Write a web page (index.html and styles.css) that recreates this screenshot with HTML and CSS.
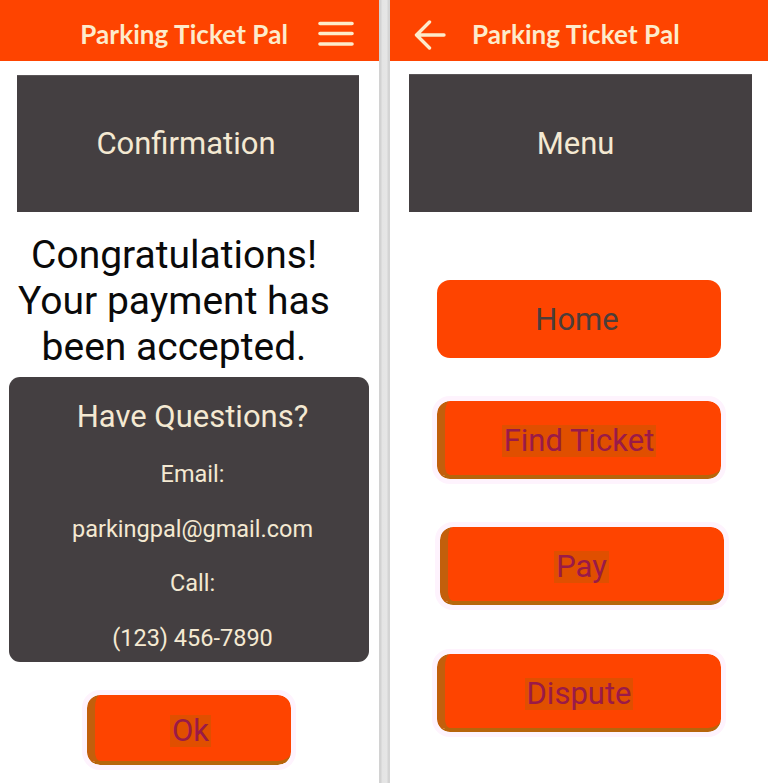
FILE: index.html
```html
<!DOCTYPE html>
<html lang="en">
<head>
<meta charset="utf-8">
<title>Parking Ticket Pal</title>
<link rel="stylesheet" href="styles.css">
</head>
<body>
<div class="screens">
  <section class="screen screen-left">
    <header class="appbar appbar-end">
      <span class="app-title">Parking Ticket Pal</span>
      <svg class="icon-menu" width="36" height="26" viewBox="0 0 36 26" aria-hidden="true">
        <path d="M2 2.5H34M2 12.5H34M2 23H34" stroke="#FDEBCB" stroke-width="3.6" stroke-linecap="round" fill="none"/>
      </svg>
    </header>
    <div class="banner banner-left">Confirmation</div>
    <p class="congrats">Congratulations!<br>Your payment has<br>been accepted.</p>
    <div class="questions">
      <h2 class="q-title">Have Questions?</h2>
      <p class="q-line">Email:</p>
      <p class="q-line">parkingpal@gmail.com</p>
      <p class="q-line">Call:</p>
      <p class="q-line">(123) 456-7890</p>
    </div>
    <div class="ok-wrap">
      <button class="btn btn-shadow btn-ok"><span class="btn-label">Ok</span></button>
    </div>
  </section>
  <div class="divider"></div>
  <section class="screen screen-right">
    <header class="appbar appbar-start">
      <svg class="icon-back" width="32" height="30" viewBox="0 0 32 30" aria-hidden="true">
        <path d="M30 15H3M15.5 2L2.5 15L15.5 28" stroke="#FDEBCB" stroke-width="3.4" stroke-linecap="round" stroke-linejoin="round" fill="none"/>
      </svg>
      <span class="app-title">Parking Ticket Pal</span>
    </header>
    <div class="banner banner-right">Menu</div>
    <nav class="menu">
      <button class="btn btn-plain btn-home">Home</button>
      <button class="btn btn-shadow btn-find"><span class="btn-label">Find Ticket</span></button>
      <button class="btn btn-shadow btn-pay"><span class="btn-label">Pay</span></button>
      <button class="btn btn-shadow btn-dispute"><span class="btn-label">Dispute</span></button>
    </nav>
  </section>
</div>
</body>
</html>
```

FILE: styles.css
```css
html, body {
  margin: 0;
  padding: 0;
  background: #ffffff;
}

body {
  font-family: Roboto, "Liberation Sans", sans-serif;
  width: 768px;
  height: 783px;
  overflow: hidden;
}

.screens {
  display: flex;
  height: 783px;
}

.screen {
  display: flex;
  flex-direction: column;
  background: #ffffff;
}

.screen-left {
  width: 379px;
}

.screen-right {
  flex: 1;
}

.divider {
  width: 11px;
  background: linear-gradient(to right, #d2d2d2 0, #d2d2d2 2px, #e4e4e4 3px, #e6e6e6 8px, #d4d4d4 9px, #d4d4d4 11px);
}

.appbar {
  height: 61px;
  background: #FE4400;
  display: flex;
  align-items: center;
  box-sizing: border-box;
}

.appbar-end {
  justify-content: flex-end;
  padding-right: 25px;
  gap: 30px;
}

.appbar-start {
  padding-left: 24px;
  gap: 26px;
}

.app-title {
  font-family: Lato, "Open Sans", sans-serif;
  font-weight: 700;
  font-size: 26px;
  color: #FDEBCB;
  letter-spacing: 0.1px;
  padding-top: 7px;
}

.icon-menu {
  display: block;
  margin-top: 6px;
}

.icon-back {
  display: block;
  margin-top: 8px;
}

.banner {
  background: #443F41;
  color: #F4E9D2;
  font-size: 31px;
  display: flex;
  align-items: center;
  justify-content: center;
  margin-top: 14px;
  height: 137px;
  box-shadow: inset 0 1px 0 #5a5557;
}

.banner-left {
  margin-left: 17px;
  margin-right: 20px;
  padding-right: 4px;
}

.banner-right {
  margin-top: 13px;
  margin-left: 19px;
  margin-right: 16px;
  height: 138px;
  padding-right: 10px;
}

.congrats {
  margin: 20px 0 0 0;
  padding-right: 31px;
  text-align: center;
  font-size: 39px;
  line-height: 46px;
  color: #0a0a0a;
}

.questions {
  margin: 7px 10px 0 9px;
  background: #443F41;
  border-radius: 11px;
  padding: 20px 0 0 0;
  height: 265px;
  text-align: center;
  color: #F4E9D2;
}

.q-title {
  margin: 0 0 10px 0;
  font-weight: 400;
  font-size: 31px;
  line-height: 40px;
  padding-left: 7px;
}

.q-line {
  margin: 0;
  font-size: 23.5px;
  line-height: 54.5px;
  padding-left: 7px;
}

.ok-wrap {
  display: flex;
  justify-content: center;
  margin-top: 33px;
  padding-right: 2px;
}

.btn {
  font-family: Roboto, "Liberation Sans", sans-serif;
  background: #FE4400;
  border: none;
  border-radius: 13px;
  padding: 0;
  display: flex;
  align-items: center;
  justify-content: center;
  box-sizing: border-box;
  font-size: 31px;
  cursor: pointer;
}

.btn-shadow {
  border-left: 8px solid #C25F0C;
  border-bottom: 4px solid #B7650B;
  color: #9A1A48;
  outline: 5px solid #FEF3FD;
  padding-top: 5px;
  padding-right: 8px;
}

.btn-label {
  background: #E04F00;
  line-height: 32px;
  padding: 0 2px;
}

.btn-plain {
  color: #4C3D39;
  padding-right: 4px;
}

.btn-ok {
  width: 204px;
  height: 70px;
  padding-right: 4px;
}

.menu {
  display: flex;
  flex-direction: column;
  align-items: center;
}

.menu .btn {
  width: 284px;
  height: 78px;
}

.btn-home {
  margin-top: 68px;
}

.btn-find {
  margin-top: 43px;
}

.btn-pay {
  margin-top: 48px;
  margin-left: 5px;
}

.btn-dispute {
  margin-top: 49px;
}
```
